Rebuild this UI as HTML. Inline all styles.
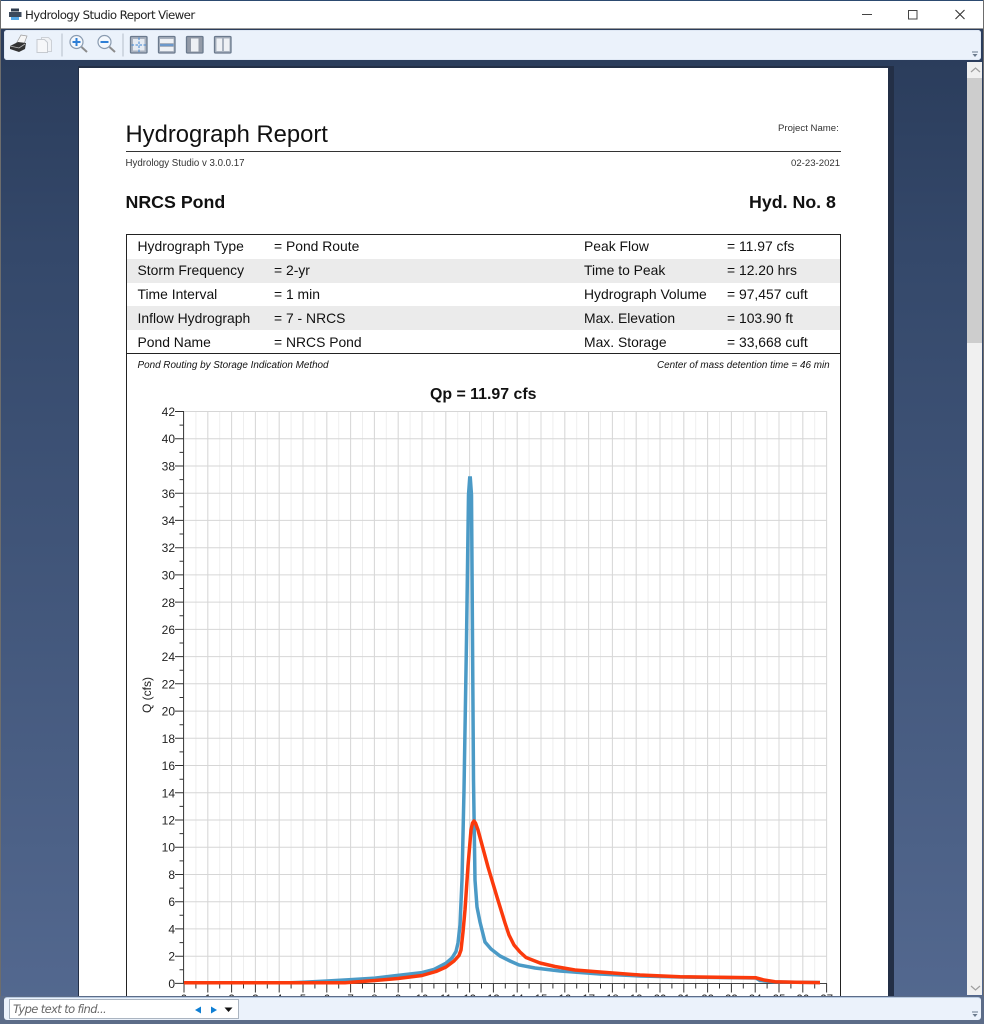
<!DOCTYPE html>
<html><head><meta charset="utf-8"><style>
html,body{margin:0;padding:0}
body{width:984px;height:1024px;position:relative;overflow:hidden;font-family:"Liberation Sans",sans-serif;background:#505f7e}
.a{position:absolute}
.t{position:absolute;white-space:nowrap;color:#111;line-height:1}
.r{position:absolute;left:127px;width:713px;height:24px;font-size:13.9px;color:#111}
.r span{position:absolute;top:4px;white-space:nowrap;line-height:14px}
.d span{top:5px}
.c1{left:10.5px}.c2{left:147px}.c3{left:457px}.c4{left:600px}
svg{position:absolute;left:0;top:0}
svg text{font-family:"Liberation Sans",sans-serif}
</style></head><body>
<div class="a" style="left:0;top:0;width:984px;height:1024px;background:linear-gradient(#2b3d5c 60px,#34486a 250px,#53688f 1000px)"></div>
<div class="a" style="left:0;top:0;width:984px;height:1px;background:#2c4a70"></div>
<div class="a" style="left:1px;top:1px;width:982px;height:27px;background:#fff"></div>
<div class="a" style="left:0;top:28px;width:984px;height:1px;background:#9a9a9a"></div>
<div class="a" style="left:0;top:0;width:1px;height:1024px;background:#6d6d6d"></div>
<div class="a" style="left:983px;top:0;width:1px;height:1024px;background:#6d6d6d"></div>
<div class="t" style="left:25px;top:10px;font-size:11.8px;font-family:'DejaVu Sans',sans-serif;letter-spacing:-.62px;color:#222">Hydrology Studio Report Viewer</div>
<div class="a" style="left:4px;top:30px;width:977px;height:30px;background:#ebf2fb;border-radius:3px;box-shadow:inset 0 0 0 1px #dfe8f4"></div>

<!-- page -->
<div class="a" style="left:78px;top:66px;width:816px;height:932px;background:#232f46"></div>
<div class="a" style="left:79px;top:68px;width:809px;height:929px;background:#fff"></div>

<div class="t" style="left:125.5px;top:122.500px;font-size:23.8px;color:#111">Hydrograph Report</div>
<div class="t" style="left:778px;top:123.500px;font-size:9.6px;color:#333">Project Name:</div>
<div class="a" style="left:126px;top:151px;width:715px;height:1px;background:#333"></div>
<div class="t" style="left:125.5px;top:158.500px;font-size:9.7px;color:#333">Hydrology Studio v 3.0.0.17</div>
<div class="t" style="left:791px;top:158.500px;font-size:9.6px;color:#333">02-23-2021</div>
<div class="t" style="left:125.5px;top:193.500px;font-size:17.8px;font-weight:bold">NRCS Pond</div>
<div class="t" style="left:749px;top:193.500px;font-size:17.8px;font-weight:bold">Hyd. No. 8</div>

<div class="a" style="left:126px;top:234px;width:713px;height:770px;border:1px solid #222"></div>
<div class="r" style="top:235px"><span class="c1">Hydrograph Type</span><span class="c2">= Pond Route</span><span class="c3">Peak Flow</span><span class="c4">= 11.97 cfs</span></div>
<div class="r" style="top:259px;background:#ebebeb"><span class="c1">Storm Frequency</span><span class="c2">= 2-yr</span><span class="c3">Time to Peak</span><span class="c4">= 12.20 hrs</span></div>
<div class="r" style="top:283px"><span class="c1">Time Interval</span><span class="c2">= 1 min</span><span class="c3">Hydrograph Volume</span><span class="c4">= 97,457 cuft</span></div>
<div class="r d" style="top:306px;background:#ebebeb"><span class="c1">Inflow Hydrograph</span><span class="c2">= 7 - NRCS</span><span class="c3">Max. Elevation</span><span class="c4">= 103.90 ft</span></div>
<div class="r d" style="top:330px"><span class="c1">Pond Name</span><span class="c2">= NRCS Pond</span><span class="c3">Max. Storage</span><span class="c4">= 33,668 cuft</span></div>
<div class="a" style="left:127px;top:353px;width:713px;height:1px;background:#222"></div>
<div class="t" style="left:137.5px;top:361px;font-size:9.9px;font-style:italic">Pond Routing by Storage Indication Method</div>
<div class="t" style="left:657px;top:361px;font-size:9.9px;font-style:italic">Center of mass detention time = 46 min</div>
<div class="t" style="left:430px;top:387px;font-size:15.9px;font-weight:bold">Qp = 11.97 cfs</div>

<svg width="984" height="1024" viewBox="0 0 984 1024">
<!-- grid -->
<line x1="183.5" y1="697" x2="827.5" y2="697" stroke="#eeeeee" stroke-width="572" stroke-dasharray="1 10.9"/>
<line x1="183.5" y1="697" x2="827.5" y2="697" stroke="#d8d8d8" stroke-width="572" stroke-dasharray="1 22.8"/>
<g stroke="#d6d6d6" stroke-width="1">
<path d="M184 411.500H827M184 438.700H827M184 466H827M184 493.200H827M184 520.400H827M184 547.700H827M184 574.900H827M184 602.100H827M184 629.400H827M184 656.600H827M184 683.800H827M184 711.100H827M184 738.300H827M184 765.500H827M184 792.800H827M184 820H827M184 847.200H827M184 874.500H827M184 901.700H827M184 928.900H827M184 956.200H827" fill="none"/>
</g>
<!-- y axis -->
<path d="M183.500 411V983.500" stroke="#444" stroke-width="1" fill="none"/>
<path d="M175 411.500h9M175 438.700h9M175 466h9M175 493.200h9M175 520.400h9M175 547.700h9M175 574.900h9M175 602.100h9M175 629.400h9M175 656.600h9M175 683.800h9M175 711.100h9M175 738.300h9M175 765.500h9M175 792.800h9M175 820h9M175 847.200h9M175 874.500h9M175 901.700h9M175 928.900h9M175 956.200h9M175 983.400h9" stroke="#333" stroke-width="1" fill="none"/>
<path d="M179.500 425.100h4M179.500 452.400h4M179.500 479.600h4M179.500 506.800h4M179.500 534h4M179.500 561.300h4M179.500 588.500h4M179.500 615.800h4M179.500 643h4M179.500 670.200h4M179.500 697.500h4M179.500 724.700h4M179.500 751.900h4M179.500 779.200h4M179.500 806.400h4M179.500 833.600h4M179.500 860.900h4M179.500 888.100h4M179.500 915.300h4M179.500 942.600h4M179.500 969.800h4" stroke="#333" stroke-width="1" fill="none"/>
<!-- x axis -->
<path d="M183.500 983.500H827" stroke="#444" stroke-width="1" fill="none"/>
<line x1="183.500" y1="988" x2="827.500" y2="988" stroke="#333" stroke-width="9" stroke-dasharray="1 22.8"/>
<line x1="195.400" y1="986" x2="827.500" y2="986" stroke="#333" stroke-width="5" stroke-dasharray="1 22.8"/>
<g font-size="12" fill="#222" text-anchor="end">
<text x="175" y="416">42</text><text x="175" y="443">40</text><text x="175" y="470.500">38</text><text x="175" y="498">36</text><text x="175" y="525">34</text><text x="175" y="552">32</text><text x="175" y="579.500">30</text><text x="175" y="607">28</text><text x="175" y="634">26</text><text x="175" y="661">24</text><text x="175" y="688.500">22</text><text x="175" y="715.500">20</text><text x="175" y="743">18</text><text x="175" y="770">16</text><text x="175" y="797.500">14</text><text x="175" y="824.500">12</text><text x="175" y="851.500">10</text><text x="175" y="879">8</text><text x="175" y="906">6</text><text x="175" y="933.500">4</text><text x="175" y="960.500">2</text><text x="175" y="988">0</text>
</g>
<g font-size="11.500" fill="#222" text-anchor="middle">
<text x="184" y="1003">0</text><text x="208" y="1003">1</text><text x="231.600" y="1003">2</text><text x="255.400" y="1003">3</text><text x="279.200" y="1003">4</text><text x="303" y="1003">5</text><text x="326.800" y="1003">6</text><text x="350.600" y="1003">7</text><text x="374.400" y="1003">8</text><text x="398.200" y="1003">9</text><text x="422" y="1003">10</text><text x="445.800" y="1003">11</text><text x="469.600" y="1003">12</text><text x="493.400" y="1003">13</text><text x="517.200" y="1003">14</text><text x="541" y="1003">15</text><text x="564.800" y="1003">16</text><text x="588.600" y="1003">17</text><text x="612.400" y="1003">18</text><text x="636.200" y="1003">19</text><text x="660" y="1003">20</text><text x="683.800" y="1003">21</text><text x="707.600" y="1003">22</text><text x="731.400" y="1003">23</text><text x="755.200" y="1003">24</text><text x="779" y="1003">25</text><text x="802.800" y="1003">26</text><text x="826.600" y="1003">27</text>
</g>
<text transform="translate(151 713) rotate(-90)" font-size="12" fill="#222">Q (cfs)</text>
<!-- curves -->
<path d="M184 982.700H290L303 982.200L327 981L351 979.600L375 978.100L398 975.300L422 972.600L434 969.400L446 963.200L452 958L456 951.500L458 943L460 925L462 880L464 790L466.500 640L468.500 495L469.700 478L470.300 478L471.500 495L473.500 780L475 880L477 907L480 922L485 942L491 949L500 956L510 961L519 965L535 968L560 971L600 974L640 976L680 977L756 978L760 980.500L775 982L820 982.500" fill="none" stroke="#4b9ac6" stroke-width="3.500" stroke-linejoin="miter" stroke-miterlimit="3"/>
<path d="M184 982.800H345L375 980.500L398 978.500L422 975.500L436 971.500L446 967L454 961L459 955.500L461 950L463 932L465 910L468 866L471 830L472.500 823L474 821L475.500 823L478 830L488 867L497 897L505 923L509 935L514 945L520 952L526 957.500L540 963L555 966.500L575 970L600 972L640 975L680 976.800L756 977.800L764 980L775 981.700L795 982.300L820 982.600" fill="none" stroke="#fb3a0c" stroke-width="3.500" stroke-linejoin="round"/>
</svg>

<!-- scrollbar -->
<div class="a" style="left:967px;top:62px;width:15px;height:933px;background:#f0f0f0"></div>
<div class="a" style="left:967px;top:78px;width:15px;height:265px;background:#cdcdcd"></div>

<!-- bottom bar -->
<div class="a" style="left:0;top:996px;width:984px;height:28px;background:#5c6c88"></div>
<div class="a" style="left:4px;top:997px;width:977px;height:23px;background:#ebf2fb;border-radius:3px;border-top:1px solid #b9cbe2;box-sizing:border-box"></div>
<div class="a" style="left:9px;top:999px;width:228px;height:18px;background:#fff;border:1px solid #aab4c0"></div>
<div class="t" style="left:13px;top:1004px;font-size:11.5px;font-family:'DejaVu Sans',sans-serif;font-style:italic;letter-spacing:-.62px;color:#666">Type text to find...</div>

<!-- chrome icons svg -->
<svg width="984" height="1024" viewBox="0 0 984 1024">
<!-- title printer -->
<path d="M11 8.500h8v3h-8z" fill="#2f3c4d"/><path d="M9 12h12.500v5H9z" fill="#3c4a5c"/><path d="M11 17h8v3h-8z" fill="#55a8e6"/>
<!-- window buttons -->
<path d="M862 14.500h10" stroke="#444" stroke-width="1"/>
<rect x="908.500" y="10.500" width="8.500" height="8.500" fill="none" stroke="#444"/>
<path d="M955.500 10l9 9M964.500 10l-9 9" stroke="#333" stroke-width="1.100"/>
<!-- toolbar printer -->
<path d="M21 35l6 1-3 8-8 0z" fill="#f6f6f6" stroke="#9a9a9a" stroke-width=".7"/>
<path d="M10 46l8-4 8 1-1 6-6 3-9-3z" fill="#333"/><path d="M10 46l9 2 6-4" stroke="#bbb" fill="none" stroke-width=".8"/>
<!-- copy disabled -->
<path d="M41.500 37.500h7l3 3v11h-10z" fill="#f1f3f6" stroke="#ccd0d6"/><path d="M37 39.500h7.500l3 3v10H37z" fill="#f6f7f9" stroke="#c6cad0"/>
<!-- seps -->
<path d="M62 33.500v23M123 33.500v23" stroke="#b5bfca" stroke-width="1"/>
<!-- zoom in -->
<circle cx="76.500" cy="42" r="6.500" fill="#f4f8fd" stroke="#8a9bb0" stroke-width="1.200"/>
<path d="M81.500 47l5.500 5" stroke="#8c8c8c" stroke-width="2"/>
<path d="M72.500 42h8M76.500 38v8" stroke="#2f7fd6" stroke-width="2"/>
<!-- zoom out -->
<circle cx="104.500" cy="42" r="6.500" fill="#f4f8fd" stroke="#8a9bb0" stroke-width="1.200"/>
<path d="M109.500 47l5.500 5" stroke="#8c8c8c" stroke-width="2"/>
<path d="M100.500 42h8" stroke="#2f7fd6" stroke-width="2"/>
<!-- page icons -->
<g fill="#a9b2bf" stroke="#6b7a8d" stroke-width="1.300">
<rect x="130.500" y="36.500" width="16.500" height="16.500" rx="1"/>
<rect x="158.500" y="36.500" width="16.500" height="16.500" rx="1"/>
<rect x="186.500" y="36.500" width="16.500" height="16.500" rx="1" fill="#939ba8"/>
<rect x="214.500" y="36.500" width="16.500" height="16.500" rx="1"/>
</g>
<rect x="133" y="39" width="11.500" height="11.500" fill="#e6ebf2"/>
<path d="M139 37.500v15M131.500 45h15" stroke="#3f86d3" stroke-width="1" stroke-dasharray="2.500 1.500"/>
<rect x="160" y="39" width="13.500" height="4" fill="#eef1f5"/><rect x="160" y="47" width="13.500" height="4" fill="#eef1f5"/>
<path d="M160 45h13.500" stroke="#2f7fd6" stroke-width="1"/>
<rect x="191" y="38.500" width="7.500" height="13" fill="#eef1f5"/>
<rect x="216.500" y="38.500" width="5.500" height="12.500" fill="#eef1f5"/><rect x="224" y="38.500" width="5.500" height="12.500" fill="#eef1f5"/>
<!-- scroll arrows -->
<path d="M971 72l4.500-4 4.500 4" fill="none" stroke="#9f9f9f" stroke-width="1.200"/>
<path d="M971 986l4.500 4 4.500-4" fill="none" stroke="#9f9f9f" stroke-width="1.200"/>
<!-- overflow grips -->
<path d="M972 52h6" stroke="#6a7a8c"/><path d="M972.500 54h5l-2.500 3z" fill="#6a7a8c"/>
<path d="M972 1012h6" stroke="#6a7a8c"/><path d="M972.500 1014h5l-2.500 3z" fill="#6a7a8c"/>
<!-- find arrows -->
<path d="M201 1006.500v7l-6-3.500z" fill="#0f7fd4"/><path d="M211 1006.500v7l6-3.500z" fill="#0f7fd4"/>
<path d="M224.500 1007.500h8l-4 4.500z" fill="#111"/>
</svg>
</body></html>
